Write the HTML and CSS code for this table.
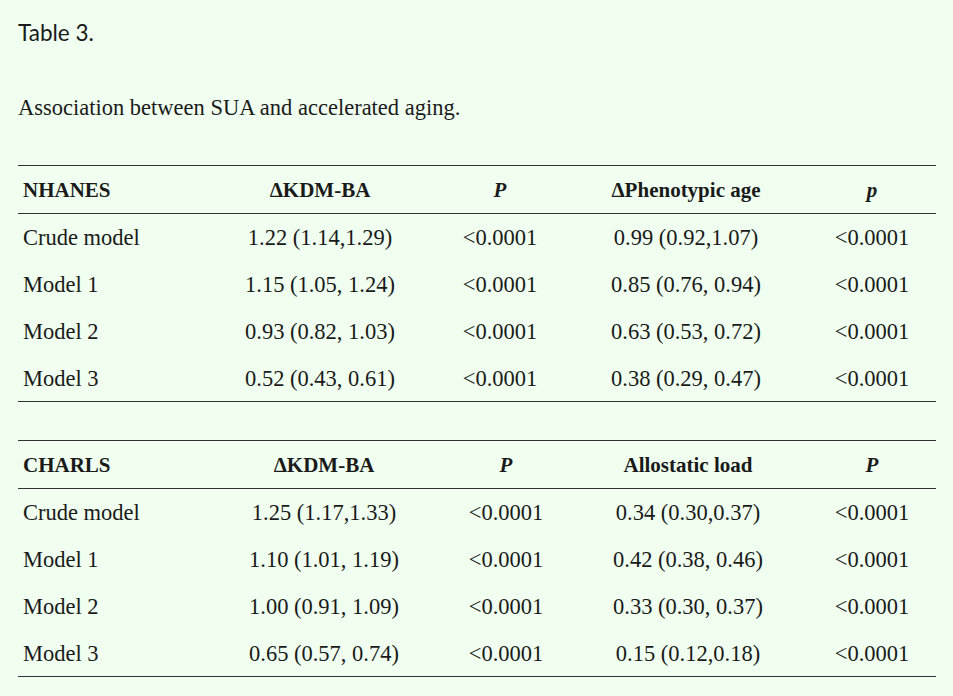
FILE: index.html
```html
<!DOCTYPE html>
<html lang="en">
<head>
<meta charset="utf-8">
<title>Table 3</title>
<link rel="stylesheet" href="styles.css">
</head>
<body>
<div class="page">
  <div class="label">Table 3.</div>
  <div class="caption">Association between SUA and accelerated aging.</div>

  <table class="data t1">
    <colgroup>
      <col class="c1"><col class="c2"><col class="c3"><col class="c4"><col class="c5">
    </colgroup>
    <thead>
      <tr><th class="first">NHANES</th><th>ΔKDM-BA</th><th><i>P</i></th><th>ΔPhenotypic age</th><th><i>p</i></th></tr>
    </thead>
    <tbody>
      <tr><td class="first">Crude model</td><td>1.22 (1.14,1.29)</td><td>&lt;0.0001</td><td>0.99 (0.92,1.07)</td><td>&lt;0.0001</td></tr>
      <tr><td class="first">Model 1</td><td>1.15 (1.05, 1.24)</td><td>&lt;0.0001</td><td>0.85 (0.76, 0.94)</td><td>&lt;0.0001</td></tr>
      <tr><td class="first">Model 2</td><td>0.93 (0.82, 1.03)</td><td>&lt;0.0001</td><td>0.63 (0.53, 0.72)</td><td>&lt;0.0001</td></tr>
      <tr><td class="first">Model 3</td><td>0.52 (0.43, 0.61)</td><td>&lt;0.0001</td><td>0.38 (0.29, 0.47)</td><td>&lt;0.0001</td></tr>
    </tbody>
  </table>

  <table class="data t2">
    <colgroup>
      <col class="c1"><col class="c2"><col class="c3"><col class="c4"><col class="c5">
    </colgroup>
    <thead>
      <tr><th class="first">CHARLS</th><th>ΔKDM-BA</th><th><i>P</i></th><th>Allostatic load</th><th><i>P</i></th></tr>
    </thead>
    <tbody>
      <tr><td class="first">Crude model</td><td>1.25 (1.17,1.33)</td><td>&lt;0.0001</td><td>0.34 (0.30,0.37)</td><td>&lt;0.0001</td></tr>
      <tr><td class="first">Model 1</td><td>1.10 (1.01, 1.19)</td><td>&lt;0.0001</td><td>0.42 (0.38, 0.46)</td><td>&lt;0.0001</td></tr>
      <tr><td class="first">Model 2</td><td>1.00 (0.91, 1.09)</td><td>&lt;0.0001</td><td>0.33 (0.30, 0.37)</td><td>&lt;0.0001</td></tr>
      <tr><td class="first">Model 3</td><td>0.65 (0.57, 0.74)</td><td>&lt;0.0001</td><td>0.15 (0.12,0.18)</td><td>&lt;0.0001</td></tr>
    </tbody>
  </table>
</div>
</body>
</html>
```

FILE: styles.css
```css
html, body {
  margin: 0;
  padding: 0;
  background: #f0fff0;
}

body {
  color: #1a1a1a;
}

.page {
  padding: 18px 17px 0 18px;
}

.label {
  font-family: Lato, "Open Sans", sans-serif;
  font-size: 22.5px;
  line-height: 30px;
  color: #1a1a1a;
}

.caption {
  margin-top: 45px;
  font-family: "Liberation Serif", serif;
  font-size: 22.5px;
  line-height: 30px;
  color: #1a1a1a;
}

.data {
  width: 918px;
  border-collapse: collapse;
  table-layout: fixed;
  margin-top: 42px;
  font-family: "Liberation Serif", serif;
  font-size: 22.5px;
  color: #1a1a1a;
}

.data + .data {
  margin-top: 38px;
}

.data thead tr {
  border-top: 1px solid #333;
  border-bottom: 1px solid #333;
}

.data tbody tr:last-child {
  border-bottom: 1px solid #333;
}

.data th,
.data td {
  padding: 2px 0 0 0;
  text-align: center;
  vertical-align: middle;
  white-space: nowrap;
}

.data th {
  height: 45px;
  font-weight: bold;
  font-size: 21px;
}

.data td {
  height: 44.75px;
}

.data .first {
  text-align: left;
  padding-left: 5px;
}

.data i {
  font-style: italic;
}

.t1 .c1 { width: 186px; }
.t1 .c2 { width: 232px; }
.t1 .c3 { width: 128px; }
.t1 .c4 { width: 244px; }
.t1 .c5 { width: 128px; }

.t2 .c1 { width: 186px; }
.t2 .c2 { width: 240px; }
.t2 .c3 { width: 124px; }
.t2 .c4 { width: 240px; }
.t2 .c5 { width: 128px; }
```
